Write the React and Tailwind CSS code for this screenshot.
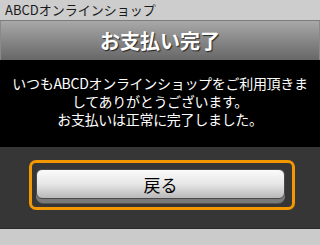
export default function App() {
  const jp = { fontFamily: '"Noto Sans CJK JP", "Noto Sans", sans-serif' };

  return (
    <div className="w-[320px] h-[245px] bg-[#cbcbcb] flex flex-col overflow-hidden" style={jp}>
      {/* ショップ名 */}
      <div className="h-[20px] bg-[#cdcdcd] pl-[5px] text-[13px] leading-[20px] text-[#1a1a1a]">
        ABCDオンラインショップ
      </div>
      <div className="h-[1px] bg-[#7c7c7c]" />

      {/* タイトル */}
      <div className="h-[39px] bg-gradient-to-b from-[#a9a9a9] to-[#676767] flex items-center justify-center border-x border-[#8a8a8a]">
        <h1 className="text-[20px] font-bold text-white leading-none [text-shadow:1px_1px_1px_#222]">
          お支払い完了
        </h1>
      </div>

      {/* メッセージ */}
      <div className="h-[87px] bg-black pt-[14px] text-center text-white text-[14px] leading-[18px] whitespace-nowrap tracking-[-0.3px]">
        <p>いつもABCDオンラインショップをご利用頂きま</p>
        <p>してありがとうございます。</p>
        <p>お支払いは正常に完了しました。</p>
      </div>

      {/* ボタン */}
      <div className="h-[82px] bg-[#363636] border-b border-[#2a2a2a] pt-[13px] pl-[29px]">
        <div className="w-[266px] h-[50px] border-[3px] border-[#f39800] rounded-[7px] pt-[6px] pl-[4px] pr-[7px] pb-[4px]">
          <div className="h-full bg-[#7a7a7a] rounded-[7px] pb-[4px] shadow-[0_1px_0_#555]">
            <button className="w-full h-full rounded-[6px] border border-[#4a4a4a] bg-gradient-to-b from-[#fbfbfb] via-[#e6e6e6] to-[#b9b9b9] text-[17px] leading-none text-black">
              戻る
            </button>
          </div>
        </div>
      </div>

      <div className="flex-1 bg-[#cbcbcb]" />
    </div>
  );
}
